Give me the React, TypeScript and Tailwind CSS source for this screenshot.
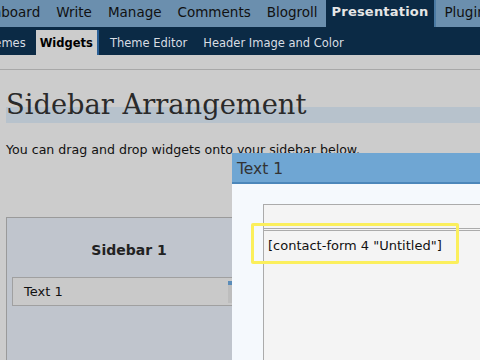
import React from 'react';

const topTabs = ['Dashboard', 'Write', 'Manage', 'Comments', 'Blogroll', 'Presentation', 'Plugins'];
const subTabs = ['Themes', 'Widgets', 'Theme Editor', 'Header Image and Color'];

export default function App() {
  return (
    <div
      className="relative w-[480px] h-[360px] overflow-hidden bg-[#cccccc] text-[#222]"
      style={{ fontFamily: '"DejaVu Sans", Verdana, sans-serif' }}
    >
      {/* main admin menu */}
      <div className="flex h-[27px] bg-[#6b8fae] ml-[-41px] whitespace-nowrap">
        {topTabs.map((t) =>
          t === 'Presentation' ? (
            <div key={t} className="px-[6px] pt-[2px] bg-[#0b2a45] text-[#e6e6e6] text-[13px] font-bold tracking-[0.2px]">
              {t}
            </div>
          ) : (
            <div
              key={t}
              className={`px-[8px] pt-[2px] text-[13.5px] text-[#111] ${t === 'Plugins' ? 'border-l-2 border-[#4b7aa3] pl-[8px]' : ''}`}
            >
              {t}
            </div>
          )
        )}
      </div>

      {/* sub menu */}
      <div className="flex items-end h-[28px] bg-[#0b2a45] ml-[-28px] whitespace-nowrap">
        {subTabs.map((t) =>
          t === 'Widgets' ? (
            <div key={t} className="h-[25px] px-[4px] pt-[5px] bg-[#cccccc] border-r-2 border-[#2a5f96] text-[11.5px] font-bold text-black ml-[2px] mr-[3px]">
              {t}
            </div>
          ) : (
            <div key={t} className="h-[25px] px-[6px] pt-[5px] text-[11.5px] text-[#d8dde3] mx-[2px]">
              {t}
            </div>
          )
        )}
      </div>

      <div className="h-[15px] border-b border-[#a8a8a8]" />

      {/* content */}
      <div className="pl-[6px]">
        <div className="relative mt-[15px] h-[40px]">
          <div className="absolute left-0 right-0 top-[22px] h-[16px] bg-[#b7c2cc]" />
          <h1
            className="relative leading-[40px] text-[#2a2a2a]"
            style={{ fontFamily: '"DejaVu Serif", Georgia, serif', fontSize: '27.3px' }}
          >
            Sidebar Arrangement
          </h1>
        </div>
        <p className="mt-[18px] text-[12.6px] leading-[14px] text-[#111]">
          You can drag and drop widgets onto your sidebar below.
        </p>

        <div className="mt-[60px] h-[200px] w-[300px] border border-[#9a9a9a] bg-[#c0c5cd] px-[5px]">
          <div className="pt-[22px] text-center text-[14px] font-bold text-[#222] pr-[54px]">Sidebar 1</div>
          <div className="mt-[16px] flex h-[29px] items-center border border-[#a0a0a0] bg-[#c9c9c9] pl-[11px] text-[13px] text-[#111]">
            Text 1
            <div className="ml-[165px] flex h-[22px] w-[6px] flex-col">
              <div className="h-[4px] bg-[#5b8cb8]" />
              <div className="flex-1 bg-[#bdbdbd]" />
            </div>
          </div>
        </div>
      </div>

      {/* widget editor dialog */}
      <div className="absolute left-[232px] top-[153px] right-0 bottom-0 flex flex-col bg-[#f5f9fd]">
        <div className="h-[31px] border-b-2 border-[#4c87ba] bg-[#6fa6d3] pl-[5px] pt-[5px] text-[15.5px] text-[#333]">
          Text 1
        </div>
        <div className="flex-1 pl-[31px] pt-[20px]">
          <div className="h-full border-l border-t border-[#ababab] bg-[#f4f4f4]">
            <div className="h-[24px] border-b border-[#ababab]" />
            <div className="mt-[1px] border-t border-[#ababab] pl-[4px] pt-[5px] text-[13px] text-[#111]">
              [contact-form 4 "Untitled"]
            </div>
          </div>
        </div>
        <div className="absolute left-[19px] top-[70px] h-[41px] w-[208px] rounded-[2px] border-[3px] border-[#fbef5c]" />
      </div>
    </div>
  );
}
